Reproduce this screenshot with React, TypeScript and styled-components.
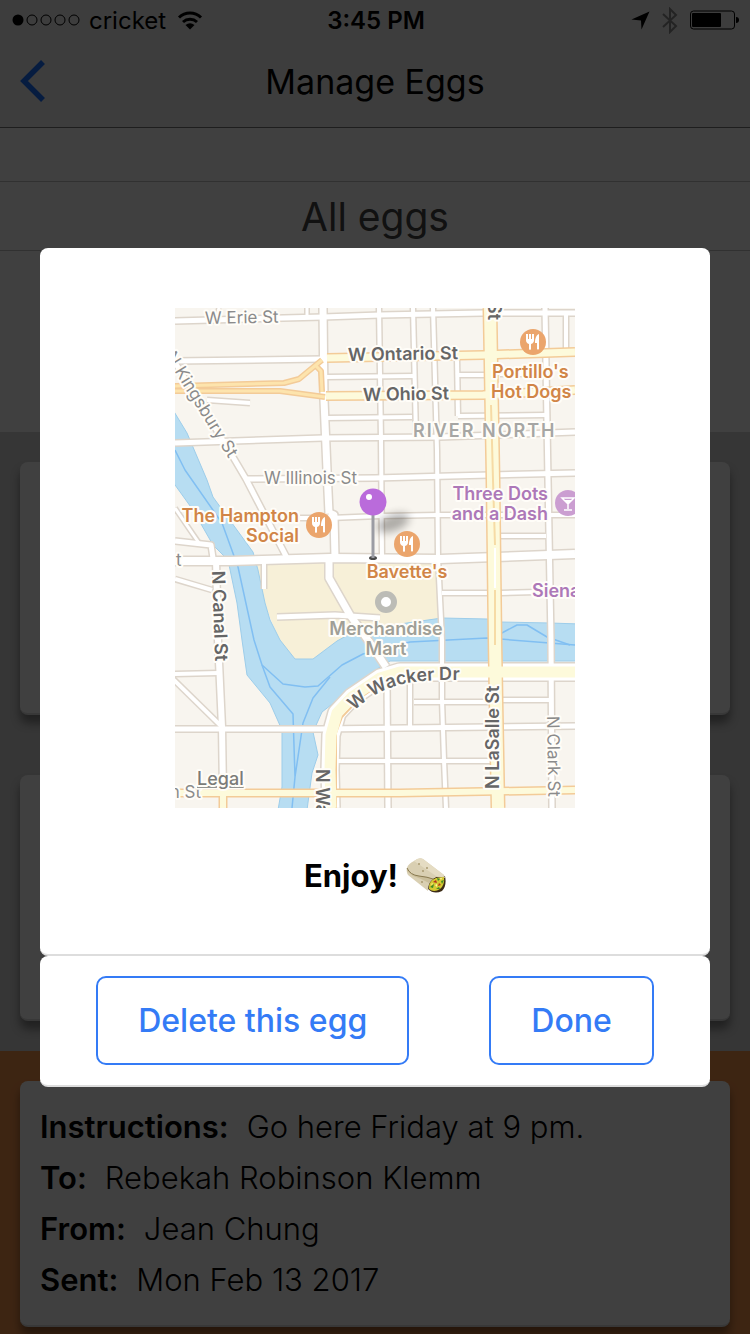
import React from "react";
import styled, { createGlobalStyle } from "styled-components";

const GlobalStyle = createGlobalStyle`
  *, *::before, *::after { box-sizing: border-box; }
  body {
    margin: 0;
    font-family: Inter, "Liberation Sans", sans-serif;
    color: #000;
    background: #fff;
  }
  h1, h2, p, dl, dd { margin: 0; font-weight: 400; }
`;

const Screen = styled.div`
  position: relative;
  height: 100vh;
  overflow: hidden;
`;

/* ---------- page behind the dialog ---------- */

const Header = styled.header`
  background: #f1f1f1;
  border-bottom: 1px solid #7a7a7a;
`;

const StatusBar = styled.div`
  display: grid;
  grid-template-columns: 1fr auto 1fr;
  align-items: center;
  height: 40px;
  padding: 0 10px 0 12px;
  font-size: 24px;
`;

const StatusGroup = styled.div<{ $end?: boolean }>`
  display: flex;
  align-items: center;
  justify-content: ${(p) => (p.$end ? "flex-end" : "flex-start")};
  gap: ${(p) => (p.$end ? "12px" : "8px")};
`;

const Clock = styled.time`
  font-weight: 600;
`;

const NavBar = styled.div`
  display: grid;
  grid-template-columns: 80px 1fr 80px;
  align-items: center;
  height: 87px;
`;

const BackButton = styled.button`
  display: flex;
  padding: 0 0 5px 20px;
  border: 0;
  background: none;
  color: #1870ff;
`;

const Title = styled.h1`
  padding-bottom: 3px;
  font-size: 34px;
  line-height: 40px;
  text-align: center;
`;

const Spacer = styled.div`
  height: 54px;
  border-bottom: 1px solid #c4c4c4;
`;

const ListTitle = styled.h2`
  height: 69px;
  border-bottom: 1px solid #c4c4c4;
  color: #444;
  font-size: 39px;
  line-height: 70px;
  text-align: center;
`;

const Blank = styled.div`
  height: 181px;
`;

const EggList = styled.section<{ $highlighted?: boolean }>`
  display: flex;
  flex-direction: column;
  gap: 60px;
  padding: 30px 20px;
  background: ${(p) => (p.$highlighted ? "#f4924a" : "#d5d5d5")};
`;

const EggCard = styled.article<{ $tall?: boolean }>`
  min-height: ${(p) => (p.$tall ? "253px" : "246px")};
  padding: 20px;
  border-bottom: 2px solid #ddd;
  border-radius: 8px;
  background: #fff;
  box-shadow: 0 8px 10px rgba(0, 0, 0, 0.4);
`;

const Details = styled.dl`
  font-size: 31px;
  line-height: 51px;
`;

const DetailLine = styled.div`
  display: flex;
  gap: 18px;
`;

const DetailName = styled.dt`
  font-weight: 600;
`;

const DetailValue = styled.dd`
  font-weight: 300;
`;

/* ---------- dialog ---------- */

const Overlay = styled.div`
  position: absolute;
  inset: 0;
  display: flex;
  align-items: center;
  padding: 0 40px;
  background: rgba(0, 0, 0, 0.75);
`;

const Dialog = styled.div`
  flex: 1;
`;

const Panel = styled.div`
  border-bottom: 2px solid #ddd;
  border-radius: 8px;
  background: #fff;
`;

const MessagePanel = styled(Panel)`
  display: flex;
  flex-direction: column;
  align-items: center;
  gap: 40px;
  padding: 60px 20px 50px;
`;

const ActionPanel = styled(Panel)`
  display: flex;
  justify-content: center;
  gap: 80px;
  padding: 20px 0;
`;

const MapView = styled.svg`
  display: block;
  width: 100%;
  max-width: 400px;
`;

const Message = styled.p`
  display: flex;
  align-items: center;
  gap: 8px;
  font-size: 31px;
  font-weight: 700;
  line-height: 56px;
`;

const ActionButton = styled.button`
  padding: 0 40px;
  border: 2px solid #347bf6;
  border-radius: 10px;
  background: #fff;
  color: #347bf6;
  font-family: inherit;
  font-size: 32px;
  font-weight: 500;
  line-height: 85px;
`;

/* ---------- map ---------- */

const MapLabel = styled.text<{ $color: string; $bold?: boolean; $spaced?: boolean }>`
  fill: ${(p) => p.$color};
  stroke: #fffdf8;
  stroke-width: 4px;
  stroke-linejoin: round;
  paint-order: stroke;
  font-size: ${(p) => (p.$bold ? "18px" : "17px")};
  font-weight: ${(p) => (p.$bold ? 600 : 400)};
  letter-spacing: ${(p) => (p.$spaced ? "2px" : "normal")};
`;

const LegalLabel = styled(MapLabel)`
  font-size: 18px;
  font-weight: 500;
  text-decoration: underline;
`;

const streets: Array<[string, number]> = [
  ["M175 321L323 317L380 315L483 313L575 313", 5],
  ["M175 361L323 359", 5],
  ["M207 400L250 403", 4],
  ["M323 308L324 400L327 470L329 513", 7],
  ["M329 513L334 515L335 558", 7],
  ["M329 555L329 578L350 615L370 643L386 667", 7],
  ["M326 377L413 376M458 375L485 375M500 374L545 374", 4],
  ["M326 418L412 417M458 416L545 415", 4],
  ["M175 443L323 438L440 437L575 432", 5],
  ["M307 308L307 316M219 308L218 312", 3],
  ["M379 308L381 440L382 557", 4],
  ["M413 308L416 436", 4],
  ["M433 308L437 450L438 557L442 640L442 700L444 760L446 808", 4],
  ["M457 358L458 416", 4],
  ["M545 308L548 480L551 640L552 808", 5],
  ["M566 313L566 352", 4],
  ["M245 479L375 478L450 476L575 473", 5],
  ["M171 356L195 395L233 457L246 479L287 558", 5],
  ["M300 518L330 518L380 516L438 515L575 515", 4],
  ["M500 536L546 536", 4],
  ["M175 541L211 545L213 558", 5],
  ["M175 508L199 543", 3],
  ["M175 579L212 590", 4],
  ["M264 562L264 589", 4],
  ["M277 617L335 615L380 618", 5],
  ["M175 561L230 561L330 558L440 559L575 554", 8],
  ["M216 560L218 640L222 727L223 793", 6],
  ["M442 593L490 593M500 593L575 591", 4],
  ["M175 674L218 673", 4],
  ["M173 679L221 726", 4],
  ["M175 729L320 729L490 727L575 726", 5],
  ["M336 761L490 761", 4],
  ["M387 680L388 808", 5],
  ["M410 678L410 727", 4],
  ["M414 702L490 702M502 700L552 700", 4],
];

const yellowRoads: Array<[string, number]> = [
  ["M327 358L483 355L575 352", 7],
  ["M326 396L483 395L575 390", 7],
  ["M175 793L400 793L575 790", 6],
  ["M223 793L223 808", 6],
  ["M490 308L493 480L495 640L496 700L498 808", 12],
];

const ramps: Array<[string, number]> = [
  ["M175 386L284 383L299 379L322 360", 3],
  ["M175 391L280 391L325 397", 3],
  ["M316 366L321 371L322 392", 3],
];

const wacker = "M575 672L400 672L380 678L352 697L337 713L331 735L330 770L331 808";

const Fork = ({ x, y }: { x: number; y: number }) => (
  <g transform={`translate(${x} ${y})`}>
    <circle r="13" fill="#eba56c" />
    <path d="M-7 -8H-5V-3H-4V-8H-2V-3H-1V-8H1V-2Q1 1 -2 2V7Q-3 9 -4 7V2Q-7 1 -7 -2Z" fill="#fff" />
    <path d="M6 -8C3 -7 2 -3 2 1H4V7Q5 8 6 7Z" fill="#fff" />
  </g>
);

const DARK = "#666666";
const GRAY = "#8b8b8b";
const ORANGE = "#d18547";
const PURPLE = "#ad78b8";
const STONE = "#a09f97";

const CityMap = () => (
  <MapView viewBox="175 308 400 500" role="img" aria-label="Map of River North">
    <defs>
      <filter id="soft" x="-50%" y="-50%" width="200%" height="200%">
        <feGaussianBlur stdDeviation="4" />
      </filter>
      <path id="kingsbury" d="M165 356L225 453L250 493" />
      <path id="wackerText" d="M354 711Q376 690 403 684T480 681" />
    </defs>
    <rect x="175" y="308" width="400" height="500" fill="#f8f5ef" />
    <path
      fill="#f7f0d8"
      d="M256 562H440L442 620L400 624L357 632L337 643L313 661H295L280 642L265 605Z"
    />
    <path
      fill="#b7ddf2"
      stroke="#9dcdea"
      d="M170 405L187 433L207 480L213 497L253 552L258 570L265 603L270 620L280 640L295 659H313L337 641L357 630L400 624L442 618L487 619L500 622L550 623L580 624V661H390L380 667L322 712L313 732L318 755L312 773L307 810H278L282 787V730L270 703L247 675L242 640L237 603L228 560L213 545L193 510L170 478Z"
    />
    <g fill="none" stroke="#81bff2" strokeWidth="1.5" strokeLinejoin="round">
      <path d="M175 450L185 470L222 523L238 567L254 640L262 665L283 684L305 687L318 686L342 665L363 654L410 642L487 638L575 645" />
      <path d="M262 665L270 687L293 714L295 777M330 677L313 698L303 723L295 777L292 808" />
      <path d="M500 634L517 625H527L547 637L570 645" />
    </g>
    <g fill="none" stroke="#ddd5cb" strokeLinejoin="round">
      {streets.map(([d, w]) => (
        <path key={d} d={d} strokeWidth={w + 3} />
      ))}
      <path d={wacker} strokeWidth="20" />
    </g>
    <g fill="none" stroke="#fff" strokeLinejoin="round">
      {streets.map(([d, w]) => (
        <path key={d} d={d} strokeWidth={w} />
      ))}
      <path d={wacker} strokeWidth="17" />
    </g>
    <g fill="none" stroke="#f3cb98" strokeLinejoin="round">
      {yellowRoads.concat(ramps).map(([d, w]) => (
        <path key={d} d={d} strokeWidth={w + 3} />
      ))}
      <path d="M336 808L336 733L342 717L360 698L376 687" strokeWidth="2" />
    </g>
    <g fill="none" stroke="#fde4ad" strokeLinejoin="round">
      {ramps.map(([d, w]) => (
        <path key={d} d={d} strokeWidth={w} />
      ))}
    </g>
    <g fill="none" stroke="#fdfadb" strokeLinejoin="round">
      {yellowRoads.map(([d, w]) => (
        <path key={d} d={d} strokeWidth={w} />
      ))}
      <path d={wacker} strokeWidth="11" />
    </g>
    <path d="M491 405L493 480L495 545M495 590V645" fill="none" stroke="#f6dba5" strokeWidth="2" />
    <path d="M495 548V588" stroke="#fff" strokeWidth="2" />

    <MapLabel $color={GRAY} x="205" y="324" transform="rotate(-1 205 324)">W Erie St</MapLabel>
    <MapLabel $color={DARK} $bold x="348" y="361" transform="rotate(-1 348 361)">W Ontario St</MapLabel>
    <MapLabel $color={DARK} $bold x="363" y="401" transform="rotate(-1 363 401)">W Ohio St</MapLabel>
    <MapLabel $color="#a6a6a4" $bold $spaced x="413" y="437">RIVER NORTH</MapLabel>
    <MapLabel $color={DARK} $bold transform="translate(488 302) rotate(90)">St</MapLabel>
    <MapLabel $color={GRAY}><textPath href="#kingsbury">N Kingsbury St</textPath></MapLabel>
    <MapLabel $color={GRAY} x="264" y="484">W Illinois St</MapLabel>
    <MapLabel $color={ORANGE} $bold x="492" y="378">Portillo's</MapLabel>
    <MapLabel $color={ORANGE} $bold x="491" y="398">Hot Dogs</MapLabel>
    <MapLabel $color={ORANGE} $bold x="299" y="522" textAnchor="end">The Hampton</MapLabel>
    <MapLabel $color={ORANGE} $bold x="299" y="542" textAnchor="end">Social</MapLabel>
    <MapLabel $color={PURPLE} $bold x="548" y="500" textAnchor="end">Three Dots</MapLabel>
    <MapLabel $color={PURPLE} $bold x="548" y="520" textAnchor="end">and a Dash</MapLabel>
    <MapLabel $color={ORANGE} $bold x="407" y="578" textAnchor="middle">Bavette's</MapLabel>
    <MapLabel $color={PURPLE} $bold x="532" y="597">Siena</MapLabel>
    <MapLabel $color={STONE} $bold x="386" y="635" textAnchor="middle">Merchandise</MapLabel>
    <MapLabel $color={STONE} $bold x="386" y="655" textAnchor="middle">Mart</MapLabel>
    <MapLabel $color={DARK} $bold transform="translate(212 571) rotate(88)">N Canal St</MapLabel>
    <MapLabel $color={DARK} $bold><textPath href="#wackerText">W Wacker Dr</textPath></MapLabel>
    <MapLabel $color={DARK} $bold transform="translate(499 789) rotate(-90)">N LaSalle St</MapLabel>
    <MapLabel $color={GRAY} transform="translate(547 716) rotate(89)">N Clark St</MapLabel>
    <MapLabel $color={DARK} $bold transform="translate(316 769) rotate(90)">N Wacker</MapLabel>
    <MapLabel $color={GRAY} x="176" y="566">t</MapLabel>
    <MapLabel $color={GRAY} x="201" y="798" textAnchor="end">n St</MapLabel>
    <LegalLabel $color="#7b7b78" x="197" y="785">Legal</LegalLabel>

    <circle cx="386" cy="602" r="8" fill="#fff" stroke="#bcbcb6" strokeWidth="6" />
    <Fork x={533} y={342} />
    <Fork x={319} y={525} />
    <g transform="translate(568 503)">
      <circle r="13" fill="#cb9ed1" />
      <path d="M-6 -5H6L0 1ZM0 0V6M-4 7H4" fill="none" stroke="#fff" strokeWidth="1.5" />
      <path d="M-4 -3H4L0 1Z" fill="#fff" />
    </g>
    <ellipse cx="393" cy="523" rx="17" ry="8" fill="#000" opacity="0.3" filter="url(#soft)" transform="rotate(-20 393 523)" />
    <Fork x={407} y={544} />
    <ellipse cx="373" cy="558" rx="4" ry="2" fill="#4a4a4a" />
    <path d="M373 512V558" stroke="#9b9ca3" strokeWidth="3" />
    <circle cx="373" cy="502" r="13.500" fill="#ba6bdb" />
    <circle cx="369" cy="497" r="3" fill="#fff" />
  </MapView>
);

const Burrito = () => (
  <svg width="40" height="36" viewBox="0 0 40 36" role="img" aria-label="burrito">
    <path d="M22 31Q21 22 30 19L39 18Q41 28 36 33Q28 37 22 31Z" fill="#3c2b16" />
    <path d="M1 10Q0 14 2 17L22 33Q22 22 30 19L39 20L38 17L17 1Q13 -1 8 3Q2 6 1 10Z" fill="#d9cfb2" />
    <path d="M8 3Q13 -1 17 1L38 17L36 19L30 18L8 3Z" fill="#e5dcc3" />
    <path d="M1 10Q4 17 13 18Q22 19 27 21L23 25Q14 20 7 18L1 13Z" fill="#c9bd99" />
    <path d="M1 10Q4 17 13 18Q22 19 27 21" fill="none" stroke="#897a50" />
    <path d="M23 31Q22 23 30 20L38 19Q39 27 34 31Q28 35 23 31Z" fill="#d4ca32" />
    <path d="M24 29L28 26L27 30ZM31 20L34 21L32 23ZM35 23L38 22L36 26ZM30 31L33 29L34 31Z" fill="#3e8a26" />
    <path d="M27 24L30 22L31 25ZM33 25L35 27L32 28Z" fill="#b62f1d" />
    <path d="M29 27L31 26L31 29ZM34 20L36 20L35 22ZM25 26L27 25L26 27Z" fill="#fff3a1" />
    <g fill="#a89a70">
      <circle cx="13" cy="6" r="1" />
      <circle cx="21" cy="10" r="1" />
      <circle cx="17" cy="13" r="1" />
      <circle cx="16" cy="24" r="1" />
    </g>
  </svg>
);

const SignalDots = () => (
  <svg width="69" height="12" viewBox="0 0 69 12" role="img" aria-label="Signal">
    <circle cx="6" cy="6" r="5.500" />
    {[20, 34, 48, 62].map((x) => (
      <circle key={x} cx={x} cy="6" r="5" fill="none" stroke="#000" />
    ))}
  </svg>
);

const Wifi = () => (
  <svg width="30" height="19" viewBox="-3 0 30 19" role="img" aria-label="Wi-Fi">
    <path d="M2 6.500A16 16 0 0 1 24 6.500M6 11A10.500 10.500 0 0 1 20 11" fill="none" stroke="#000" strokeWidth="3" />
    <path d="M13 18.500L8.500 14Q13 10.500 17.500 14Z" />
  </svg>
);

const LocationArrow = () => (
  <svg width="19" height="19" viewBox="0 0 19 19" role="img" aria-label="Location in use">
    <path d="M18.500 0.500L10.500 18.500L10 9.500L0.500 8.500Z" />
  </svg>
);

const Bluetooth = () => (
  <svg width="16" height="27" viewBox="0 0 16 27" role="img" aria-label="Bluetooth">
    <path d="M1 7L14 19L8 25V2L14 8L1 20" fill="none" stroke="#8c8c8c" strokeWidth="2" />
  </svg>
);

const Battery = () => (
  <svg width="50" height="20" viewBox="0 0 50 20" role="img" aria-label="Battery">
    <rect x="0.500" y="1" width="44" height="18" rx="3" fill="none" stroke="#000" />
    <rect x="2" y="3" width="29" height="14" rx="1" />
    <path d="M46 7Q49 7 49 10T46 13Z" />
  </svg>
);

const details = [
  { name: "Instructions:", value: "Go here Friday at 9 pm." },
  { name: "To:", value: "Rebekah Robinson Klemm" },
  { name: "From:", value: "Jean Chung" },
  { name: "Sent:", value: "Mon Feb 13 2017" },
];

export default function App() {
  return (
    <Screen>
      <GlobalStyle />
      <Header>
        <StatusBar>
          <StatusGroup>
            <SignalDots />
            <span>cricket</span>
            <Wifi />
          </StatusGroup>
          <Clock>3:45 PM</Clock>
          <StatusGroup $end>
            <LocationArrow />
            <Bluetooth />
            <Battery />
          </StatusGroup>
        </StatusBar>
        <NavBar>
          <BackButton aria-label="Back">
            <svg width="26" height="42" viewBox="0 0 26 42" aria-hidden="true">
              <path d="M23 2L4 21L23 40" fill="none" stroke="currentColor" strokeWidth="5.500" />
            </svg>
          </BackButton>
          <Title>Manage Eggs</Title>
        </NavBar>
      </Header>
      <main>
        <Spacer />
        <ListTitle>All eggs</ListTitle>
        <Blank />
        <EggList>
          <EggCard $tall />
          <EggCard />
        </EggList>
        <EggList $highlighted>
          <EggCard>
            <Details>
              {details.map((d) => (
                <DetailLine key={d.name}>
                  <DetailName>{d.name}</DetailName>
                  <DetailValue>{d.value}</DetailValue>
                </DetailLine>
              ))}
            </Details>
          </EggCard>
        </EggList>
      </main>
      <Overlay>
        <Dialog role="dialog" aria-modal="true" aria-label="Egg location">
          <MessagePanel>
            <CityMap />
            <Message>
              Enjoy! <Burrito />
            </Message>
          </MessagePanel>
          <ActionPanel>
            <ActionButton>Delete this egg</ActionButton>
            <ActionButton>Done</ActionButton>
          </ActionPanel>
        </Dialog>
      </Overlay>
    </Screen>
  );
}
